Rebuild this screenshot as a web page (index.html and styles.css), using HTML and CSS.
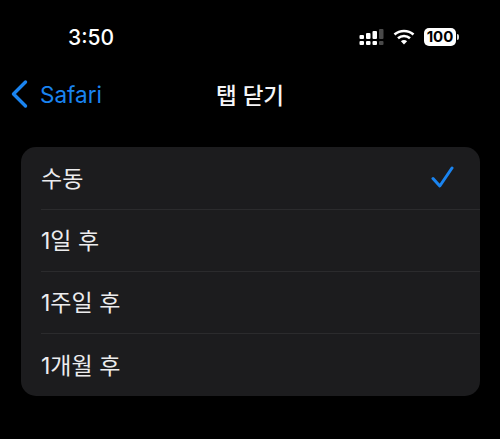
FILE: index.html
```html
<!DOCTYPE html>
<html lang="ko">
<head>
    <meta charset="UTF-8">
    <title>탭 닫기</title>
    <link rel="stylesheet" href="styles.css">
</head>
<body>
    <div class="status-bar">
        <span class="time">3:50</span>
        <div class="status-icons">
            <svg class="signal" width="25" height="18" viewBox="0 0 24 18">
                <g fill="#fff">
                    <rect x="0" y="6" width="4.5" height="4" rx="1"/>
                    <rect x="0" y="12" width="4.5" height="4" rx="1"/>
                    <rect x="6.500" y="4" width="4.500" height="6" rx="1"/>
                    <rect x="6.500" y="12" width="4.500" height="4" rx="1"/>
                    <rect x="13" y="2" width="4.500" height="8" rx="1"/>
                    <rect x="13" y="12" width="4.500" height="4" rx="1"/>
                </g>
                <g fill="#4a4a4a">
                    <rect x="19.500" y="0" width="4.500" height="10" rx="1"/>
                    <rect x="19.500" y="12" width="4.500" height="4" rx="1"/>
                </g>
            </svg>
            <svg class="wifi" width="22" height="16" viewBox="0 0 22 16">
                <path d="M1.500 5.500C6.800 .8 15.200 .8 20.500 5.500" fill="none" stroke="#fff" stroke-width="2.600"/>
                <path d="M5 9.200C8.300 6.300 13.700 6.300 17 9.200" fill="none" stroke="#fff" stroke-width="2.600"/>
                <path d="M7.900 12.200C9.700 10.600 12.300 10.600 14.100 12.200L11 15.500Z" fill="#fff"/>
            </svg>
            <div class="battery">
                <span class="battery-level">100</span>
                <span class="battery-cap"></span>
            </div>
        </div>
    </div>

    <nav class="nav-bar">
        <a class="back-link">
            <svg width="18" height="30" viewBox="0 0 18 30">
                <path d="M15.500 3L3.500 15L15.500 27" fill="none" stroke="#1a84f0" stroke-width="3.400" stroke-linecap="round" stroke-linejoin="round"/>
            </svg>
            <span>Safari</span>
        </a>
        <h1 class="nav-title">탭 닫기</h1>
    </nav>

    <ul class="option-list">
        <li class="option">
            <span>수동</span>
            <svg class="check" width="24" height="22" viewBox="0 0 24 22">
                <path d="M2 12.500L8.800 20L21 2" fill="none" stroke="#1a84f0" stroke-width="3" stroke-linecap="round" stroke-linejoin="round"/>
            </svg>
        </li>
        <li class="option"><span>1일 후</span></li>
        <li class="option"><span>1주일 후</span></li>
        <li class="option"><span>1개월 후</span></li>
    </ul>
</body>
</html>
```

FILE: styles.css
```css
body {
    margin: 0;
    height: 439px;
    overflow: hidden;
    background-color: #000;
    color: #f5f5f7;
    font-family: "Inter", "Noto Sans CJK KR", sans-serif;
}
.status-bar {
    display: flex;
    justify-content: space-between;
    align-items: center;
    height: 28px;
    padding: 23px 41px 0 68px;
}
.time {
    font-size: 21px;
    font-weight: 500;
    color: #fff;
}
.status-icons {
    display: flex;
    align-items: center;
    gap: 9px;
}
.signal {
    margin-top: 2px;
}
.battery {
    display: flex;
    align-items: center;
    gap: 1px;
}
.battery-level {
    width: 32px;
    height: 18px;
    line-height: 18px;
    border-radius: 5px;
    background-color: #fff;
    color: #000;
    font-size: 15px;
    font-weight: 700;
    text-align: center;
}
.battery-cap {
    width: 2px;
    height: 6px;
    border-radius: 0 2px 2px 0;
    background-color: #d8d8d8;
}
.nav-bar {
    display: flex;
    justify-content: center;
    align-items: center;
    position: relative;
    height: 36px;
    margin-top: 25px;
}
.back-link {
    position: absolute;
    left: 10px;
    top: 3px;
    display: flex;
    align-items: center;
    gap: 12px;
    color: #1a84f0;
    font-size: 22.5px;
}
.nav-title {
    margin: 0;
    font-size: 22.5px;
    font-weight: 500;
}
.option-list {
    margin: 35px 20px 0 21px;
    padding: 0 0 0 20px;
    list-style: none;
    background-color: #1c1c1e;
    border-radius: 15px;
}
.option {
    display: flex;
    justify-content: space-between;
    align-items: center;
    box-sizing: border-box;
    height: 62px;
    padding: 0 25px 3px 0;
    border-bottom: 1px solid #2b2b2d;
    font-size: 23px;
    color: #ececee;
}
.option:first-child {
    height: 63px;
}
.option:last-child {
    border-bottom: 0;
}
```
